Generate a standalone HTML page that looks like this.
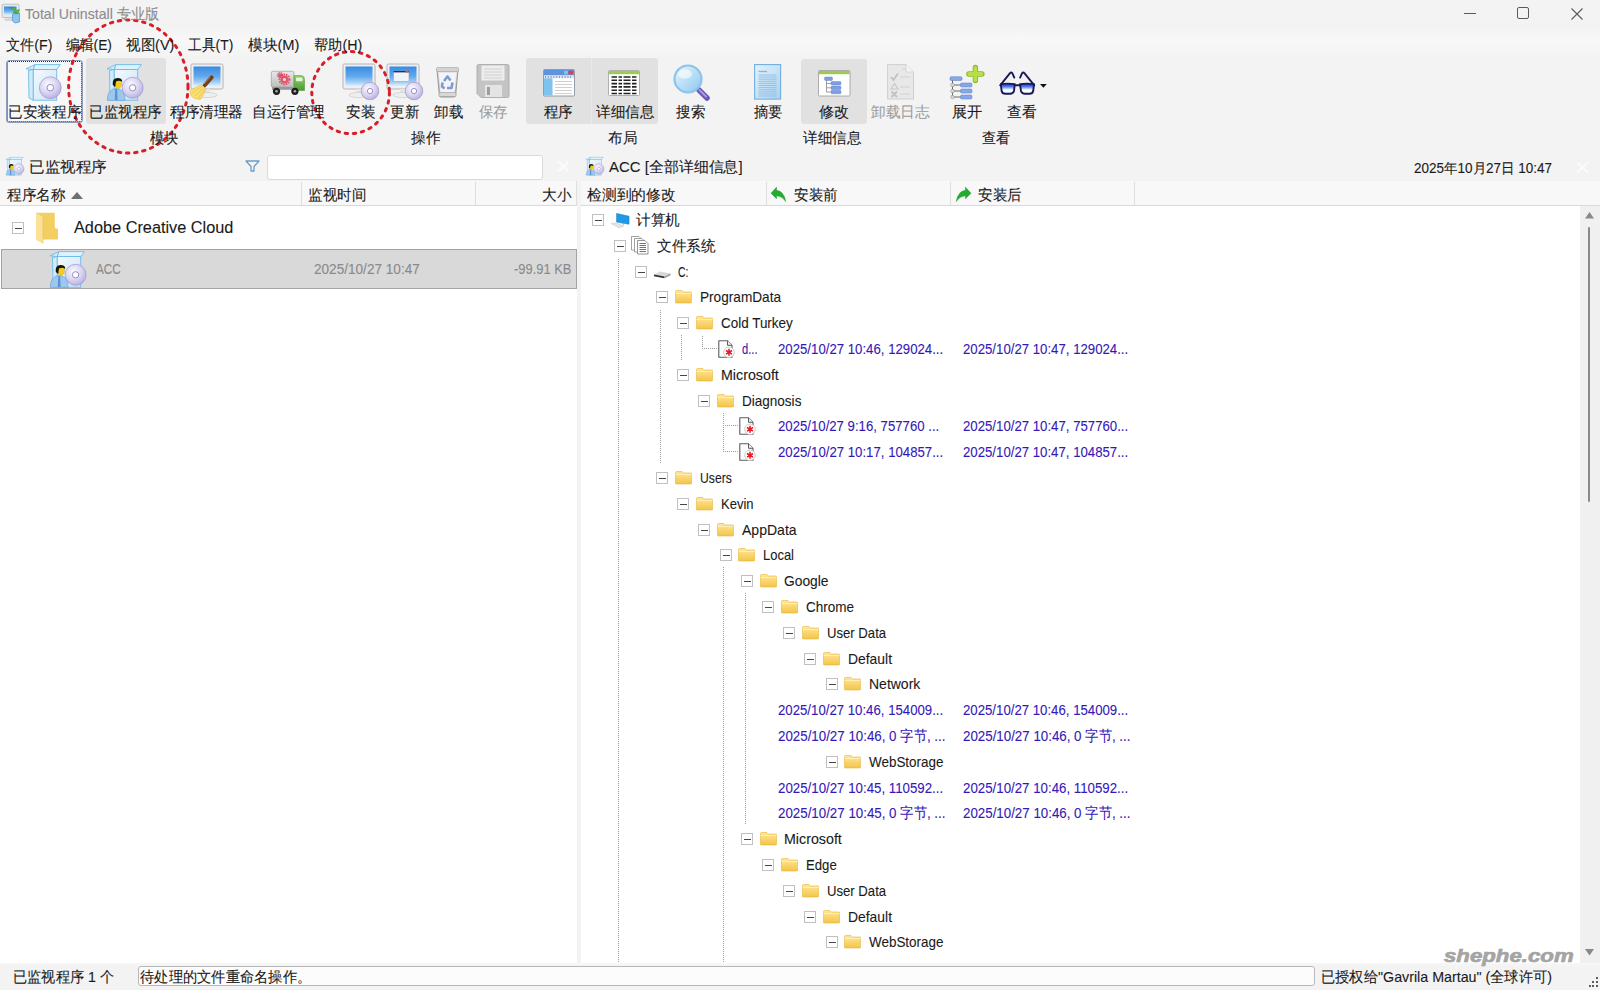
<!DOCTYPE html><html><head><meta charset="utf-8"><style>
html,body{margin:0;padding:0;width:1600px;height:990px;overflow:hidden;font-family:'Liberation Sans', sans-serif;background:#f3f3f3}
div[id]{-webkit-text-stroke:0.1px currentColor}
</style></head><body><svg width="0" height="0" style="position:absolute">
<defs>
<linearGradient id="gScreen" x1="0" y1="0" x2="0" y2="1"><stop offset="0" stop-color="#3a8ae2"/><stop offset="0.5" stop-color="#62aaec"/><stop offset="0.8" stop-color="#a6d2f6"/><stop offset="1" stop-color="#e8f4fd"/></linearGradient>
<radialGradient id="gCD" cx="0.4" cy="0.35" r="0.75"><stop offset="0" stop-color="#fbfaff"/><stop offset="0.55" stop-color="#d8d2f0"/><stop offset="1" stop-color="#aea6da"/></radialGradient>
<linearGradient id="gBox" x1="0" y1="0" x2="1" y2="1"><stop offset="0" stop-color="#f4faff"/><stop offset="1" stop-color="#c8e4f6"/></linearGradient>
<linearGradient id="gFolder" x1="0" y1="0" x2="0" y2="1"><stop offset="0" stop-color="#ffe89a"/><stop offset="1" stop-color="#f3c44a"/></linearGradient>
<linearGradient id="gFolderL" x1="0" y1="0" x2="1" y2="0"><stop offset="0" stop-color="#f6d77a"/><stop offset="1" stop-color="#fbe7a6"/></linearGradient>
<linearGradient id="gGray" x1="0" y1="0" x2="0" y2="1"><stop offset="0" stop-color="#e8e8e8"/><stop offset="1" stop-color="#bdbdbd"/></linearGradient>
<linearGradient id="gGreen" x1="0" y1="0" x2="0" y2="1"><stop offset="0" stop-color="#8fd46a"/><stop offset="1" stop-color="#4f9a34"/></linearGradient>
<linearGradient id="gMag" x1="0" y1="0" x2="1" y2="1"><stop offset="0" stop-color="#e9f6ff"/><stop offset="1" stop-color="#8cc8ee"/></linearGradient>
<linearGradient id="gPage" x1="0" y1="0" x2="1" y2="1"><stop offset="0" stop-color="#e4f2fc"/><stop offset="1" stop-color="#a9d3f1"/></linearGradient>
<linearGradient id="gGlass" x1="0" y1="0" x2="0" y2="1"><stop offset="0" stop-color="#ffffff"/><stop offset="1" stop-color="#3b59d8"/></linearGradient>
</defs></svg>
<div style="position:absolute;left:0px;top:0px;width:1600px;height:990px;background:#f3f3f3"></div>
<div style="position:absolute;left:0px;top:28px;width:1600px;height:28px;background:linear-gradient(#f3f3f3,#f8f8f8 40%,#f4f4f4)"></div>
<div style="position:absolute;left:1464px;top:13.1px;width:12px;height:1.3px;background:#5a5a5a"></div>
<div style="position:absolute;left:1517px;top:7px;width:12px;height:12px;border:1.2px solid #5a5a5a;border-radius:2px;box-sizing:border-box"></div>
<svg style="position:absolute;left:1571px;top:8px;overflow:visible" width="12" height="12" viewBox="0 0 12 12" ><path d="M0.5 0.5 L11.5 11.5 M11.5 0.5 L0.5 11.5" stroke="#5a5a5a" stroke-width="1.1"/></svg>
<div style="position:absolute;left:5.5px;top:59.5px;width:77.5px;height:63px;background:#f7f7f7;border:1px solid #8b9bb8;border-radius:3px;box-sizing:border-box;outline:1px dotted #1f2a44;outline-offset:-2px"></div>
<div style="position:absolute;left:85.5px;top:58px;width:80px;height:65.5px;background:#e1e1e1;border-radius:3px"></div>
<div style="position:absolute;left:525.5px;top:58px;width:132.5px;height:66px;background:#e1e1e1;border-radius:3px"></div>
<div style="position:absolute;left:591px;top:58px;width:1.2px;height:66px;background:#e9e9e9"></div>
<div style="position:absolute;left:801px;top:58.5px;width:66px;height:65.5px;background:#e1e1e1;border-radius:3px"></div>
<div style="position:absolute;left:266.5px;top:154.5px;width:276px;height:25px;background:#fff;border:1px solid #dadada;border-radius:3px;box-sizing:border-box"></div>
<svg style="position:absolute;left:558px;top:161px;overflow:visible" width="11" height="11" viewBox="0 0 11 11" ><path d="M0.5 0.5 L10.5 10.5 M10.5 0.5 L0.5 10.5" stroke="#fbfbfb" stroke-width="2"/></svg>
<svg style="position:absolute;left:245px;top:159.5px;overflow:visible" width="15" height="12" viewBox="0 0 15 12" ><path d="M1 1 L14 1 L9 6.5 L9 11 L6 11 L6 6.5 Z" fill="none" stroke="#6e9cc8" stroke-width="1.3" stroke-linejoin="round"/></svg>
<svg style="position:absolute;left:1577px;top:162px;overflow:visible" width="11" height="11" viewBox="0 0 11 11" ><path d="M0.5 0.5 L10.5 10.5 M10.5 0.5 L0.5 10.5" stroke="#fbfbfb" stroke-width="2"/></svg>
<div style="position:absolute;left:0px;top:181px;width:577px;height:782px;background:#fff"></div>
<div style="position:absolute;left:0px;top:181px;width:577px;height:25px;background:#f8f8f8;border-bottom:1px solid #d9d9d9;box-sizing:border-box"></div>
<div style="position:absolute;left:301px;top:182px;width:1px;height:23px;background:#dedede"></div>
<div style="position:absolute;left:475px;top:182px;width:1px;height:23px;background:#dedede"></div>
<div style="position:absolute;left:576px;top:181px;width:1px;height:25px;background:#dedede"></div>
<svg style="position:absolute;left:71px;top:192px;overflow:visible" width="12" height="7" viewBox="0 0 12 7" ><path d="M0 7 L6 0 L12 7 Z" fill="#707070"/></svg>
<div style="position:absolute;left:12px;top:222px;width:12px;height:12px;background:#fff;border:1px solid #c0c0c0;box-sizing:border-box"></div>
<div style="position:absolute;left:14.5px;top:227.5px;width:7px;height:1.5px;background:#474747"></div>
<div style="position:absolute;left:1px;top:248.5px;width:576px;height:40.5px;background:#d9d9d9;border:1px solid #a3a3a3;box-sizing:border-box"></div>
<div style="position:absolute;left:581px;top:181px;width:1019px;height:25px;background:#f8f8f8;border-bottom:1px solid #d9d9d9;box-sizing:border-box"></div>
<div style="position:absolute;left:581px;top:206px;width:999px;height:757px;background:#fff"></div>
<div style="position:absolute;left:1580px;top:206px;width:20px;height:757px;background:#f0f0f0"></div>
<div style="position:absolute;left:765.5px;top:182px;width:1px;height:23px;background:#dedede"></div>
<div style="position:absolute;left:949.5px;top:182px;width:1px;height:23px;background:#dedede"></div>
<div style="position:absolute;left:1134px;top:182px;width:1px;height:23px;background:#dedede"></div>
<div style="position:absolute;left:0px;top:963px;width:1600px;height:27px;background:linear-gradient(#f8f8f8,#f3f3f3 3px)"></div>
<div style="position:absolute;left:138px;top:966.4px;width:1177px;height:19.4px;background:#fcfcfc;border:1px solid #b8b8b8;border-radius:3px;box-sizing:border-box"></div>
<svg style="position:absolute;left:0px;top:0px;overflow:visible" width="24" height="26" viewBox="0 0 24 26" ><rect x="2" y="4.2" width="17" height="13.3" rx="1" fill="#e8e8e8" stroke="#b8b8b8" stroke-width="0.8"/><rect x="4" y="6.5" width="12.5" height="8.5" fill="url(#gScreen)"/><ellipse cx="9" cy="19.5" rx="5" ry="1.5" fill="#d8d8d8"/><path d="M12.5 14 L19.5 13 L19.5 22 L15 23 L12.5 21 Z" fill="#8cc6ee" stroke="#4f8fd0" stroke-width="0.7"/><path d="M9 7.5 Q15 6.5 17 10.5 L19.5 9.5 L17.5 14 L13 12.5 L15.5 11.5 Q14 9 9 7.5 Z" fill="#58b840" stroke="#2f8a2a" stroke-width="0.5"/></svg>
<svg style="position:absolute;left:5.5px;top:157px;overflow:visible" width="18" height="19" viewBox="0 0 36 38" ><path d="M0 4.8 L8.9 0.6 L7.3 5.5 Z" fill="#d6eefb" stroke="#6cbbe8" stroke-width="0.9" stroke-linejoin="round"/><path d="M8.9 0.6 L34.4 0.6 L30.7 5.5 L7.3 5.5 Z" fill="#dff2fc" stroke="#6cbbe8" stroke-width="0.9" stroke-linejoin="round"/><path d="M2.5 6.5 L7.3 5.5 L7.3 36.2 L3 34 Z" fill="#d2ebf9" stroke="#6cbbe8" stroke-width="0.9" stroke-linejoin="round"/><rect x="7.3" y="5.5" width="23.4" height="30.7" fill="url(#gBox)" stroke="#6cbbe8" stroke-width="0.9"/><circle cx="25.6" cy="23.8" r="10.5" fill="url(#gCD)" stroke="#a49cd0" stroke-width="0.8"/><circle cx="25.6" cy="23.8" r="3.15" fill="#fff" stroke="#8f86c4" stroke-width="0.94"/><path d="M0.3 36.4 Q0.3 25 9.2 24.5 Q18.2 25 18.2 36.4 Z" fill="#9cc8ee" stroke="#6ba4d8" stroke-width="0.7"/><path d="M8.2 25 L10.2 25 L10.6 36 L7.8 36 Z" fill="#5e90d6"/><ellipse cx="11" cy="19.8" rx="3.6" ry="4.7" fill="#f6cc1a" stroke="#c9a010" stroke-width="0.4"/><path d="M5.8 21 Q5 14 10.5 14 Q15.5 14 15.2 18 Q12.5 16 9 17.5 Q8.5 20 8.3 23 Z" fill="#141414"/></svg>
<svg style="position:absolute;left:586px;top:157px;overflow:visible" width="18" height="19" viewBox="0 0 36 38" ><path d="M0 4.8 L8.9 0.6 L7.3 5.5 Z" fill="#d6eefb" stroke="#6cbbe8" stroke-width="0.9" stroke-linejoin="round"/><path d="M8.9 0.6 L34.4 0.6 L30.7 5.5 L7.3 5.5 Z" fill="#dff2fc" stroke="#6cbbe8" stroke-width="0.9" stroke-linejoin="round"/><path d="M2.5 6.5 L7.3 5.5 L7.3 36.2 L3 34 Z" fill="#d2ebf9" stroke="#6cbbe8" stroke-width="0.9" stroke-linejoin="round"/><rect x="7.3" y="5.5" width="23.4" height="30.7" fill="url(#gBox)" stroke="#6cbbe8" stroke-width="0.9"/><circle cx="25.6" cy="23.8" r="10.5" fill="url(#gCD)" stroke="#a49cd0" stroke-width="0.8"/><circle cx="25.6" cy="23.8" r="3.15" fill="#fff" stroke="#8f86c4" stroke-width="0.94"/><path d="M0.3 36.4 Q0.3 25 9.2 24.5 Q18.2 25 18.2 36.4 Z" fill="#9cc8ee" stroke="#6ba4d8" stroke-width="0.7"/><path d="M8.2 25 L10.2 25 L10.6 36 L7.8 36 Z" fill="#5e90d6"/><ellipse cx="11" cy="19.8" rx="3.6" ry="4.7" fill="#f6cc1a" stroke="#c9a010" stroke-width="0.4"/><path d="M5.8 21 Q5 14 10.5 14 Q15.5 14 15.2 18 Q12.5 16 9 17.5 Q8.5 20 8.3 23 Z" fill="#141414"/></svg>
<svg style="position:absolute;left:50.3px;top:250.5px;overflow:visible" width="36" height="36.5" viewBox="0 0 36 36.5" ><path d="M0 4.8 L8.9 0.6 L7.3 5.5 Z" fill="#d6eefb" stroke="#6cbbe8" stroke-width="0.9" stroke-linejoin="round"/><path d="M8.9 0.6 L34.4 0.6 L30.7 5.5 L7.3 5.5 Z" fill="#dff2fc" stroke="#6cbbe8" stroke-width="0.9" stroke-linejoin="round"/><path d="M2.5 6.5 L7.3 5.5 L7.3 36.2 L3 34 Z" fill="#d2ebf9" stroke="#6cbbe8" stroke-width="0.9" stroke-linejoin="round"/><rect x="7.3" y="5.5" width="23.4" height="30.7" fill="url(#gBox)" stroke="#6cbbe8" stroke-width="0.9"/><circle cx="25.6" cy="23.8" r="10.5" fill="url(#gCD)" stroke="#a49cd0" stroke-width="0.8"/><circle cx="25.6" cy="23.8" r="3.15" fill="#fff" stroke="#8f86c4" stroke-width="0.94"/><path d="M0.3 36.4 Q0.3 25 9.2 24.5 Q18.2 25 18.2 36.4 Z" fill="#9cc8ee" stroke="#6ba4d8" stroke-width="0.7"/><path d="M8.2 25 L10.2 25 L10.6 36 L7.8 36 Z" fill="#5e90d6"/><ellipse cx="11" cy="19.8" rx="3.6" ry="4.7" fill="#f6cc1a" stroke="#c9a010" stroke-width="0.4"/><path d="M5.8 21 Q5 14 10.5 14 Q15.5 14 15.2 18 Q12.5 16 9 17.5 Q8.5 20 8.3 23 Z" fill="#141414"/></svg>
<svg style="position:absolute;left:0px;top:0px;overflow:visible" width="70" height="250" viewBox="0 0 70 250" ><path d="M36 212.8 L54.8 212.8 L54.8 228 L58 229 L58 239.5 L43 239.5 Z" fill="#f3cf62"/><path d="M36 212.8 L43 217 L43 243.5 L36 240 Z" fill="#fbe196"/><path d="M43 217 L43 243.5" stroke="#e8c050" stroke-width="0.6"/></svg>
<svg style="position:absolute;left:770px;top:186px;overflow:visible" width="17" height="16" viewBox="0 0 17 16" ><path d="M1 7.2 L6.5 1.2 L6.5 4.3 Q13.8 4.8 15.8 15.6 Q12 10 6.5 9.8 L6.5 12.8 Z" fill="#1fae2e" stroke="#158a22" stroke-width="0.4"/></svg>
<svg style="position:absolute;left:955px;top:186px;overflow:visible" width="17" height="16" viewBox="0 0 17 16" ><g transform="translate(17 0) scale(-1 1)"><path d="M1 7.2 L6.5 1.2 L6.5 4.3 Q13.8 4.8 15.8 15.6 Q12 10 6.5 9.8 L6.5 12.8 Z" fill="#1fae2e" stroke="#158a22" stroke-width="0.4"/></g></svg>
<div style="position:absolute;left:618px;top:259px;width:1px;height:704px;background:repeating-linear-gradient(#9a9a9a 0 1px,transparent 1px 2px)"></div>
<div style="position:absolute;left:660px;top:310px;width:1px;height:154px;background:repeating-linear-gradient(#9a9a9a 0 1px,transparent 1px 2px)"></div>
<div style="position:absolute;left:681px;top:335px;width:1px;height:26px;background:repeating-linear-gradient(#9a9a9a 0 1px,transparent 1px 2px)"></div>
<div style="position:absolute;left:702px;top:336px;width:1px;height:12px;background:repeating-linear-gradient(#9a9a9a 0 1px,transparent 1px 2px)"></div>
<div style="position:absolute;left:702px;top:348px;width:16px;height:1px;background:repeating-linear-gradient(90deg,#9a9a9a 0 1px,transparent 1px 2px)"></div>
<div style="position:absolute;left:723px;top:413px;width:1px;height:39px;background:repeating-linear-gradient(#9a9a9a 0 1px,transparent 1px 2px)"></div>
<div style="position:absolute;left:723px;top:425px;width:15px;height:1px;background:repeating-linear-gradient(90deg,#9a9a9a 0 1px,transparent 1px 2px)"></div>
<div style="position:absolute;left:723px;top:451px;width:15px;height:1px;background:repeating-linear-gradient(90deg,#9a9a9a 0 1px,transparent 1px 2px)"></div>
<div style="position:absolute;left:723px;top:567px;width:1px;height:396px;background:repeating-linear-gradient(#9a9a9a 0 1px,transparent 1px 2px)"></div>
<div style="position:absolute;left:745px;top:593px;width:1px;height:232px;background:repeating-linear-gradient(#9a9a9a 0 1px,transparent 1px 2px)"></div>
<div style="position:absolute;left:592px;top:214px;width:12px;height:12px;background:#fff;border:1px solid #c0c0c0;box-sizing:border-box"></div>
<div style="position:absolute;left:594.5px;top:219.5px;width:7px;height:1.5px;background:#474747"></div>
<svg style="position:absolute;left:611px;top:212.5px;overflow:visible" width="19" height="15.5" viewBox="0 0 19 15.5" ><path d="M5.6 0.5 L18 3.2 L18 11.2 L5.6 9 Z" fill="#1e9ae8" stroke="#177ec4" stroke-width="0.6"/><path d="M10 10 L13 10.6 L12 12" stroke="#a8a8a8" stroke-width="0.8" fill="none"/><path d="M0 10.5 L5 10 L13 13 L8 14.8 Z" fill="#e4e4e4" stroke="#c4c4c4" stroke-width="0.5"/></svg>
<div style="position:absolute;left:614px;top:240px;width:12px;height:12px;background:#fff;border:1px solid #c0c0c0;box-sizing:border-box"></div>
<div style="position:absolute;left:616.5px;top:245.5px;width:7px;height:1.5px;background:#474747"></div>
<svg style="position:absolute;left:631px;top:236px;overflow:visible" width="18" height="19" viewBox="0 0 18 19" ><path d="M0.5 0.5 L8 0.5 L11 3.5 L11 14 L0.5 14 Z" fill="#fff" stroke="#8a8a8a" stroke-width="0.8"/><path d="M3.5 2.5 L11 2.5 L14 5.5 L14 16 L3.5 16 Z" fill="#fff" stroke="#8a8a8a" stroke-width="0.8"/><path d="M6.5 4.5 L14 4.5 L17 7.5 L17 18 L6.5 18 Z" fill="#fff" stroke="#7a7a7a" stroke-width="0.8"/><path d="M8.5 7.5 L15 7.5 M8.5 9.5 L15 9.5 M8.5 11.5 L15 11.5 M8.5 13.5 L15 13.5 M8.5 15.5 L15 15.5" stroke="#3a7fd8" stroke-width="1"/></svg>
<div style="position:absolute;left:635px;top:266px;width:12px;height:12px;background:#fff;border:1px solid #c0c0c0;box-sizing:border-box"></div>
<div style="position:absolute;left:637.5px;top:271.5px;width:7px;height:1.5px;background:#474747"></div>
<svg style="position:absolute;left:653.5px;top:271px;overflow:visible" width="17" height="8" viewBox="0 0 17 8" ><path d="M0 3.5 L6 0.5 L16.5 2.5 L10.5 5.5 Z" fill="#d8d8d8"/><path d="M0 3.5 L10.5 5.5 L10.5 7.2 L0 5.2 Z" fill="#2e2e2e"/><path d="M10.5 5.5 L16.5 2.5 L16.5 4.2 L10.5 7.2 Z" fill="#9a9a9a"/></svg>
<div style="position:absolute;left:656px;top:291px;width:12px;height:12px;background:#fff;border:1px solid #c0c0c0;box-sizing:border-box"></div>
<div style="position:absolute;left:658.5px;top:296.5px;width:7px;height:1.5px;background:#474747"></div>
<svg style="position:absolute;left:674.5px;top:290.0px;overflow:visible" width="17" height="13.5" viewBox="0 0 17 13.5" ><path d="M0.5 1.5 Q0.5 0.5 1.5 0.5 L7 0.5 L8.5 2 L16 2 Q16.5 2 16.5 2.5 L16.5 12.5 Q16.5 13 16 13 L1 13 Q0.5 13 0.5 12.5 Z" fill="url(#gFolder)" stroke="#e8b53a" stroke-width="0.6"/><path d="M0.5 3.5 L16.5 3.5" stroke="#fff3c4" stroke-width="0.8"/></svg>
<div style="position:absolute;left:677px;top:317px;width:12px;height:12px;background:#fff;border:1px solid #c0c0c0;box-sizing:border-box"></div>
<div style="position:absolute;left:679.5px;top:322.5px;width:7px;height:1.5px;background:#474747"></div>
<svg style="position:absolute;left:696.0px;top:316.0px;overflow:visible" width="17" height="13.5" viewBox="0 0 17 13.5" ><path d="M0.5 1.5 Q0.5 0.5 1.5 0.5 L7 0.5 L8.5 2 L16 2 Q16.5 2 16.5 2.5 L16.5 12.5 Q16.5 13 16 13 L1 13 Q0.5 13 0.5 12.5 Z" fill="url(#gFolder)" stroke="#e8b53a" stroke-width="0.6"/><path d="M0.5 3.5 L16.5 3.5" stroke="#fff3c4" stroke-width="0.8"/></svg>
<svg style="position:absolute;left:717.5px;top:339.5px;overflow:visible" width="15" height="18" viewBox="0 0 15 18" ><path d="M0.8 0.8 L9.5 0.8 L14 5.3 L14 17.2 L0.8 17.2 Z" fill="#fff" stroke="#5c5c5c" stroke-width="1.1" stroke-linejoin="round"/><path d="M9.5 0.8 L9.5 5.3 L14 5.3" fill="#eee" stroke="#5c5c5c" stroke-width="1"/><circle cx="11" cy="12.3" r="5.3" fill="#fff" stroke="#bdbdbd" stroke-width="0.8"/><path d="M11 8.8 L11 15.8 M8 10.5 L14 14.1 M14 10.5 L8 14.1" stroke="#e8141e" stroke-width="1.5"/></svg>
<div style="position:absolute;left:677px;top:369px;width:12px;height:12px;background:#fff;border:1px solid #c0c0c0;box-sizing:border-box"></div>
<div style="position:absolute;left:679.5px;top:374.5px;width:7px;height:1.5px;background:#474747"></div>
<svg style="position:absolute;left:696.0px;top:367.5px;overflow:visible" width="17" height="13.5" viewBox="0 0 17 13.5" ><path d="M0.5 1.5 Q0.5 0.5 1.5 0.5 L7 0.5 L8.5 2 L16 2 Q16.5 2 16.5 2.5 L16.5 12.5 Q16.5 13 16 13 L1 13 Q0.5 13 0.5 12.5 Z" fill="url(#gFolder)" stroke="#e8b53a" stroke-width="0.6"/><path d="M0.5 3.5 L16.5 3.5" stroke="#fff3c4" stroke-width="0.8"/></svg>
<div style="position:absolute;left:698px;top:395px;width:12px;height:12px;background:#fff;border:1px solid #c0c0c0;box-sizing:border-box"></div>
<div style="position:absolute;left:700.5px;top:400.5px;width:7px;height:1.5px;background:#474747"></div>
<svg style="position:absolute;left:717.0px;top:393.5px;overflow:visible" width="17" height="13.5" viewBox="0 0 17 13.5" ><path d="M0.5 1.5 Q0.5 0.5 1.5 0.5 L7 0.5 L8.5 2 L16 2 Q16.5 2 16.5 2.5 L16.5 12.5 Q16.5 13 16 13 L1 13 Q0.5 13 0.5 12.5 Z" fill="url(#gFolder)" stroke="#e8b53a" stroke-width="0.6"/><path d="M0.5 3.5 L16.5 3.5" stroke="#fff3c4" stroke-width="0.8"/></svg>
<svg style="position:absolute;left:738.7px;top:416.9px;overflow:visible" width="15" height="18" viewBox="0 0 15 18" ><path d="M0.8 0.8 L9.5 0.8 L14 5.3 L14 17.2 L0.8 17.2 Z" fill="#fff" stroke="#5c5c5c" stroke-width="1.1" stroke-linejoin="round"/><path d="M9.5 0.8 L9.5 5.3 L14 5.3" fill="#eee" stroke="#5c5c5c" stroke-width="1"/><circle cx="11" cy="12.3" r="5.3" fill="#fff" stroke="#bdbdbd" stroke-width="0.8"/><path d="M11 8.8 L11 15.8 M8 10.5 L14 14.1 M14 10.5 L8 14.1" stroke="#e8141e" stroke-width="1.5"/></svg>
<svg style="position:absolute;left:738.7px;top:442.70000000000005px;overflow:visible" width="15" height="18" viewBox="0 0 15 18" ><path d="M0.8 0.8 L9.5 0.8 L14 5.3 L14 17.2 L0.8 17.2 Z" fill="#fff" stroke="#5c5c5c" stroke-width="1.1" stroke-linejoin="round"/><path d="M9.5 0.8 L9.5 5.3 L14 5.3" fill="#eee" stroke="#5c5c5c" stroke-width="1"/><circle cx="11" cy="12.3" r="5.3" fill="#fff" stroke="#bdbdbd" stroke-width="0.8"/><path d="M11 8.8 L11 15.8 M8 10.5 L14 14.1 M14 10.5 L8 14.1" stroke="#e8141e" stroke-width="1.5"/></svg>
<div style="position:absolute;left:656px;top:472px;width:12px;height:12px;background:#fff;border:1px solid #c0c0c0;box-sizing:border-box"></div>
<div style="position:absolute;left:658.5px;top:477.5px;width:7px;height:1.5px;background:#474747"></div>
<svg style="position:absolute;left:674.5px;top:471.0px;overflow:visible" width="17" height="13.5" viewBox="0 0 17 13.5" ><path d="M0.5 1.5 Q0.5 0.5 1.5 0.5 L7 0.5 L8.5 2 L16 2 Q16.5 2 16.5 2.5 L16.5 12.5 Q16.5 13 16 13 L1 13 Q0.5 13 0.5 12.5 Z" fill="url(#gFolder)" stroke="#e8b53a" stroke-width="0.6"/><path d="M0.5 3.5 L16.5 3.5" stroke="#fff3c4" stroke-width="0.8"/></svg>
<div style="position:absolute;left:677px;top:498px;width:12px;height:12px;background:#fff;border:1px solid #c0c0c0;box-sizing:border-box"></div>
<div style="position:absolute;left:679.5px;top:503.5px;width:7px;height:1.5px;background:#474747"></div>
<svg style="position:absolute;left:696.0px;top:496.5px;overflow:visible" width="17" height="13.5" viewBox="0 0 17 13.5" ><path d="M0.5 1.5 Q0.5 0.5 1.5 0.5 L7 0.5 L8.5 2 L16 2 Q16.5 2 16.5 2.5 L16.5 12.5 Q16.5 13 16 13 L1 13 Q0.5 13 0.5 12.5 Z" fill="url(#gFolder)" stroke="#e8b53a" stroke-width="0.6"/><path d="M0.5 3.5 L16.5 3.5" stroke="#fff3c4" stroke-width="0.8"/></svg>
<div style="position:absolute;left:698px;top:524px;width:12px;height:12px;background:#fff;border:1px solid #c0c0c0;box-sizing:border-box"></div>
<div style="position:absolute;left:700.5px;top:529.5px;width:7px;height:1.5px;background:#474747"></div>
<svg style="position:absolute;left:717.0px;top:522.5px;overflow:visible" width="17" height="13.5" viewBox="0 0 17 13.5" ><path d="M0.5 1.5 Q0.5 0.5 1.5 0.5 L7 0.5 L8.5 2 L16 2 Q16.5 2 16.5 2.5 L16.5 12.5 Q16.5 13 16 13 L1 13 Q0.5 13 0.5 12.5 Z" fill="url(#gFolder)" stroke="#e8b53a" stroke-width="0.6"/><path d="M0.5 3.5 L16.5 3.5" stroke="#fff3c4" stroke-width="0.8"/></svg>
<div style="position:absolute;left:720px;top:549px;width:12px;height:12px;background:#fff;border:1px solid #c0c0c0;box-sizing:border-box"></div>
<div style="position:absolute;left:722.5px;top:554.5px;width:7px;height:1.5px;background:#474747"></div>
<svg style="position:absolute;left:738.0px;top:548.0px;overflow:visible" width="17" height="13.5" viewBox="0 0 17 13.5" ><path d="M0.5 1.5 Q0.5 0.5 1.5 0.5 L7 0.5 L8.5 2 L16 2 Q16.5 2 16.5 2.5 L16.5 12.5 Q16.5 13 16 13 L1 13 Q0.5 13 0.5 12.5 Z" fill="url(#gFolder)" stroke="#e8b53a" stroke-width="0.6"/><path d="M0.5 3.5 L16.5 3.5" stroke="#fff3c4" stroke-width="0.8"/></svg>
<div style="position:absolute;left:741px;top:575px;width:12px;height:12px;background:#fff;border:1px solid #c0c0c0;box-sizing:border-box"></div>
<div style="position:absolute;left:743.5px;top:580.5px;width:7px;height:1.5px;background:#474747"></div>
<svg style="position:absolute;left:759.5px;top:574.0px;overflow:visible" width="17" height="13.5" viewBox="0 0 17 13.5" ><path d="M0.5 1.5 Q0.5 0.5 1.5 0.5 L7 0.5 L8.5 2 L16 2 Q16.5 2 16.5 2.5 L16.5 12.5 Q16.5 13 16 13 L1 13 Q0.5 13 0.5 12.5 Z" fill="url(#gFolder)" stroke="#e8b53a" stroke-width="0.6"/><path d="M0.5 3.5 L16.5 3.5" stroke="#fff3c4" stroke-width="0.8"/></svg>
<div style="position:absolute;left:762px;top:601px;width:12px;height:12px;background:#fff;border:1px solid #c0c0c0;box-sizing:border-box"></div>
<div style="position:absolute;left:764.5px;top:606.5px;width:7px;height:1.5px;background:#474747"></div>
<svg style="position:absolute;left:780.5px;top:600.0px;overflow:visible" width="17" height="13.5" viewBox="0 0 17 13.5" ><path d="M0.5 1.5 Q0.5 0.5 1.5 0.5 L7 0.5 L8.5 2 L16 2 Q16.5 2 16.5 2.5 L16.5 12.5 Q16.5 13 16 13 L1 13 Q0.5 13 0.5 12.5 Z" fill="url(#gFolder)" stroke="#e8b53a" stroke-width="0.6"/><path d="M0.5 3.5 L16.5 3.5" stroke="#fff3c4" stroke-width="0.8"/></svg>
<div style="position:absolute;left:783px;top:627px;width:12px;height:12px;background:#fff;border:1px solid #c0c0c0;box-sizing:border-box"></div>
<div style="position:absolute;left:785.5px;top:632.5px;width:7px;height:1.5px;background:#474747"></div>
<svg style="position:absolute;left:802.0px;top:625.5px;overflow:visible" width="17" height="13.5" viewBox="0 0 17 13.5" ><path d="M0.5 1.5 Q0.5 0.5 1.5 0.5 L7 0.5 L8.5 2 L16 2 Q16.5 2 16.5 2.5 L16.5 12.5 Q16.5 13 16 13 L1 13 Q0.5 13 0.5 12.5 Z" fill="url(#gFolder)" stroke="#e8b53a" stroke-width="0.6"/><path d="M0.5 3.5 L16.5 3.5" stroke="#fff3c4" stroke-width="0.8"/></svg>
<div style="position:absolute;left:804px;top:653px;width:12px;height:12px;background:#fff;border:1px solid #c0c0c0;box-sizing:border-box"></div>
<div style="position:absolute;left:806.5px;top:658.5px;width:7px;height:1.5px;background:#474747"></div>
<svg style="position:absolute;left:823.0px;top:651.5px;overflow:visible" width="17" height="13.5" viewBox="0 0 17 13.5" ><path d="M0.5 1.5 Q0.5 0.5 1.5 0.5 L7 0.5 L8.5 2 L16 2 Q16.5 2 16.5 2.5 L16.5 12.5 Q16.5 13 16 13 L1 13 Q0.5 13 0.5 12.5 Z" fill="url(#gFolder)" stroke="#e8b53a" stroke-width="0.6"/><path d="M0.5 3.5 L16.5 3.5" stroke="#fff3c4" stroke-width="0.8"/></svg>
<div style="position:absolute;left:826px;top:678px;width:12px;height:12px;background:#fff;border:1px solid #c0c0c0;box-sizing:border-box"></div>
<div style="position:absolute;left:828.5px;top:683.5px;width:7px;height:1.5px;background:#474747"></div>
<svg style="position:absolute;left:844.0px;top:677.0px;overflow:visible" width="17" height="13.5" viewBox="0 0 17 13.5" ><path d="M0.5 1.5 Q0.5 0.5 1.5 0.5 L7 0.5 L8.5 2 L16 2 Q16.5 2 16.5 2.5 L16.5 12.5 Q16.5 13 16 13 L1 13 Q0.5 13 0.5 12.5 Z" fill="url(#gFolder)" stroke="#e8b53a" stroke-width="0.6"/><path d="M0.5 3.5 L16.5 3.5" stroke="#fff3c4" stroke-width="0.8"/></svg>
<div style="position:absolute;left:826px;top:756px;width:12px;height:12px;background:#fff;border:1px solid #c0c0c0;box-sizing:border-box"></div>
<div style="position:absolute;left:828.5px;top:761.5px;width:7px;height:1.5px;background:#474747"></div>
<svg style="position:absolute;left:844.0px;top:754.5px;overflow:visible" width="17" height="13.5" viewBox="0 0 17 13.5" ><path d="M0.5 1.5 Q0.5 0.5 1.5 0.5 L7 0.5 L8.5 2 L16 2 Q16.5 2 16.5 2.5 L16.5 12.5 Q16.5 13 16 13 L1 13 Q0.5 13 0.5 12.5 Z" fill="url(#gFolder)" stroke="#e8b53a" stroke-width="0.6"/><path d="M0.5 3.5 L16.5 3.5" stroke="#fff3c4" stroke-width="0.8"/></svg>
<div style="position:absolute;left:741px;top:833px;width:12px;height:12px;background:#fff;border:1px solid #c0c0c0;box-sizing:border-box"></div>
<div style="position:absolute;left:743.5px;top:838.5px;width:7px;height:1.5px;background:#474747"></div>
<svg style="position:absolute;left:759.5px;top:832.0px;overflow:visible" width="17" height="13.5" viewBox="0 0 17 13.5" ><path d="M0.5 1.5 Q0.5 0.5 1.5 0.5 L7 0.5 L8.5 2 L16 2 Q16.5 2 16.5 2.5 L16.5 12.5 Q16.5 13 16 13 L1 13 Q0.5 13 0.5 12.5 Z" fill="url(#gFolder)" stroke="#e8b53a" stroke-width="0.6"/><path d="M0.5 3.5 L16.5 3.5" stroke="#fff3c4" stroke-width="0.8"/></svg>
<div style="position:absolute;left:762px;top:859px;width:12px;height:12px;background:#fff;border:1px solid #c0c0c0;box-sizing:border-box"></div>
<div style="position:absolute;left:764.5px;top:864.5px;width:7px;height:1.5px;background:#474747"></div>
<svg style="position:absolute;left:780.5px;top:858.0px;overflow:visible" width="17" height="13.5" viewBox="0 0 17 13.5" ><path d="M0.5 1.5 Q0.5 0.5 1.5 0.5 L7 0.5 L8.5 2 L16 2 Q16.5 2 16.5 2.5 L16.5 12.5 Q16.5 13 16 13 L1 13 Q0.5 13 0.5 12.5 Z" fill="url(#gFolder)" stroke="#e8b53a" stroke-width="0.6"/><path d="M0.5 3.5 L16.5 3.5" stroke="#fff3c4" stroke-width="0.8"/></svg>
<div style="position:absolute;left:783px;top:885px;width:12px;height:12px;background:#fff;border:1px solid #c0c0c0;box-sizing:border-box"></div>
<div style="position:absolute;left:785.5px;top:890.5px;width:7px;height:1.5px;background:#474747"></div>
<svg style="position:absolute;left:802.0px;top:883.5px;overflow:visible" width="17" height="13.5" viewBox="0 0 17 13.5" ><path d="M0.5 1.5 Q0.5 0.5 1.5 0.5 L7 0.5 L8.5 2 L16 2 Q16.5 2 16.5 2.5 L16.5 12.5 Q16.5 13 16 13 L1 13 Q0.5 13 0.5 12.5 Z" fill="url(#gFolder)" stroke="#e8b53a" stroke-width="0.6"/><path d="M0.5 3.5 L16.5 3.5" stroke="#fff3c4" stroke-width="0.8"/></svg>
<div style="position:absolute;left:804px;top:911px;width:12px;height:12px;background:#fff;border:1px solid #c0c0c0;box-sizing:border-box"></div>
<div style="position:absolute;left:806.5px;top:916.5px;width:7px;height:1.5px;background:#474747"></div>
<svg style="position:absolute;left:823.0px;top:909.5px;overflow:visible" width="17" height="13.5" viewBox="0 0 17 13.5" ><path d="M0.5 1.5 Q0.5 0.5 1.5 0.5 L7 0.5 L8.5 2 L16 2 Q16.5 2 16.5 2.5 L16.5 12.5 Q16.5 13 16 13 L1 13 Q0.5 13 0.5 12.5 Z" fill="url(#gFolder)" stroke="#e8b53a" stroke-width="0.6"/><path d="M0.5 3.5 L16.5 3.5" stroke="#fff3c4" stroke-width="0.8"/></svg>
<div style="position:absolute;left:826px;top:936px;width:12px;height:12px;background:#fff;border:1px solid #c0c0c0;box-sizing:border-box"></div>
<div style="position:absolute;left:828.5px;top:941.5px;width:7px;height:1.5px;background:#474747"></div>
<svg style="position:absolute;left:844.0px;top:935.0px;overflow:visible" width="17" height="13.5" viewBox="0 0 17 13.5" ><path d="M0.5 1.5 Q0.5 0.5 1.5 0.5 L7 0.5 L8.5 2 L16 2 Q16.5 2 16.5 2.5 L16.5 12.5 Q16.5 13 16 13 L1 13 Q0.5 13 0.5 12.5 Z" fill="url(#gFolder)" stroke="#e8b53a" stroke-width="0.6"/><path d="M0.5 3.5 L16.5 3.5" stroke="#fff3c4" stroke-width="0.8"/></svg>
<svg style="position:absolute;left:1585px;top:212px;overflow:visible" width="9" height="6.5" viewBox="0 0 9 6.5" ><path d="M0 6.5 L4.5 0 L9 6.5 Z" fill="#8a8a8a"/></svg>
<div style="position:absolute;left:1587.7px;top:227px;width:2.5px;height:275px;background:#8a8a8a;border-radius:2px"></div>
<svg style="position:absolute;left:1585px;top:949px;overflow:visible" width="9" height="6.5" viewBox="0 0 9 6.5" ><path d="M0 0 L4.5 6.5 L9 0 Z" fill="#8a8a8a"/></svg>
<div style="position:absolute;left:1596.3px;top:977.2px;width:2.2px;height:2.2px;background:#2a2a2a;border-radius:50%"></div>
<div style="position:absolute;left:1592.3px;top:980.8px;width:2.2px;height:2.2px;background:#2a2a2a;border-radius:50%"></div>
<div style="position:absolute;left:1596.3px;top:980.8px;width:2.2px;height:2.2px;background:#2a2a2a;border-radius:50%"></div>
<div style="position:absolute;left:1588.7px;top:984.5px;width:2.2px;height:2.2px;background:#2a2a2a;border-radius:50%"></div>
<div style="position:absolute;left:1592.3px;top:984.5px;width:2.2px;height:2.2px;background:#2a2a2a;border-radius:50%"></div>
<div style="position:absolute;left:1596.3px;top:984.5px;width:2.2px;height:2.2px;background:#2a2a2a;border-radius:50%"></div>
<svg style="position:absolute;left:25.8px;top:63.5px;overflow:visible" width="36" height="36" viewBox="0 0 36 36" ><path d="M0 4.8 L8.9 0.6 L7.3 5.5 Z" fill="#d6eefb" stroke="#6cbbe8" stroke-width="0.9" stroke-linejoin="round"/><path d="M8.9 0.6 L34.4 0.6 L30.7 5.5 L7.3 5.5 Z" fill="#dff2fc" stroke="#6cbbe8" stroke-width="0.9" stroke-linejoin="round"/><path d="M2.5 6.5 L7.3 5.5 L7.3 36.2 L3 34 Z" fill="#d2ebf9" stroke="#6cbbe8" stroke-width="0.9" stroke-linejoin="round"/><rect x="7.3" y="5.5" width="23.4" height="30.7" fill="url(#gBox)" stroke="#6cbbe8" stroke-width="0.9"/><circle cx="24.3" cy="23.7" r="10.9" fill="url(#gCD)" stroke="#a49cd0" stroke-width="0.8"/><circle cx="24.3" cy="23.7" r="3.27" fill="#fff" stroke="#8f86c4" stroke-width="0.98"/></svg>
<svg style="position:absolute;left:107px;top:63.5px;overflow:visible" width="36" height="36" viewBox="0 0 36 36" ><path d="M0 4.8 L8.9 0.6 L7.3 5.5 Z" fill="#d6eefb" stroke="#6cbbe8" stroke-width="0.9" stroke-linejoin="round"/><path d="M8.9 0.6 L34.4 0.6 L30.7 5.5 L7.3 5.5 Z" fill="#dff2fc" stroke="#6cbbe8" stroke-width="0.9" stroke-linejoin="round"/><path d="M2.5 6.5 L7.3 5.5 L7.3 36.2 L3 34 Z" fill="#d2ebf9" stroke="#6cbbe8" stroke-width="0.9" stroke-linejoin="round"/><rect x="7.3" y="5.5" width="23.4" height="30.7" fill="url(#gBox)" stroke="#6cbbe8" stroke-width="0.9"/><circle cx="25.6" cy="23.8" r="10.5" fill="url(#gCD)" stroke="#a49cd0" stroke-width="0.8"/><circle cx="25.6" cy="23.8" r="3.15" fill="#fff" stroke="#8f86c4" stroke-width="0.94"/><path d="M0.3 36.4 Q0.3 25 9.2 24.5 Q18.2 25 18.2 36.4 Z" fill="#9cc8ee" stroke="#6ba4d8" stroke-width="0.7"/><path d="M8.2 25 L10.2 25 L10.6 36 L7.8 36 Z" fill="#5e90d6"/><ellipse cx="11" cy="19.8" rx="3.6" ry="4.7" fill="#f6cc1a" stroke="#c9a010" stroke-width="0.4"/><path d="M5.8 21 Q5 14 10.5 14 Q15.5 14 15.2 18 Q12.5 16 9 17.5 Q8.5 20 8.3 23 Z" fill="#141414"/></svg>
<svg style="position:absolute;left:190px;top:63.4px;overflow:visible" width="35" height="36" viewBox="0 0 35 36" ><rect x="1" y="1" width="32" height="25" rx="1.5" fill="#efefef" stroke="#b4b4b4" stroke-width="1"/><rect x="3.5" y="3.5" width="27" height="20" fill="url(#gScreen)"/><rect x="14" y="26" width="6" height="4" fill="#e6e6e6"/><ellipse cx="17" cy="32" rx="10" ry="2.6" fill="#eeeeee" stroke="#cfcfcf" stroke-width="0.8"/><path d="M12.5 22.5 L20 13.5 Q21.5 12 22.8 13.2 Q24 14.5 22.5 16 L15 24.5 Z" fill="#7a3e10" stroke="#4a2508" stroke-width="0.5"/><path d="M14 21 L20.5 13.8" stroke="#d89050" stroke-width="0.7"/><path d="M11.5 21.5 L16 26 L11 36 Q5 37 1.5 33 Q-0.5 30 0 27.5 Z" fill="#f7df72" stroke="#d8b440" stroke-width="0.5"/><path d="M2.5 29.5 L12.5 23 M5 33 L14 24.5 M8.5 35 L15 26" stroke="#e6c24a" stroke-width="0.7"/></svg>
<svg style="position:absolute;left:270.8px;top:71px;overflow:visible" width="34" height="24" viewBox="0 0 34 24" ><rect x="0.3" y="0.3" width="22.6" height="16" rx="1.5" fill="url(#gGray)" stroke="#9c9c9c" stroke-width="0.7"/><g transform="translate(13.5 8.4)"><circle r="4.9" fill="none" stroke="#e0506a" stroke-width="2.2" stroke-dasharray="1.4 1.0"/><circle r="3.9" fill="#e25a6e"/><circle r="1.5" fill="#f6e0e0"/></g><g transform="translate(9 4.2)"><circle r="2.5" fill="none" stroke="#d84060" stroke-width="1.4" stroke-dasharray="1 0.8"/><circle r="1.8" fill="#e05068"/></g><path d="M23 4.6 L30.5 4.6 Q33.5 5 33.5 8.5 L33.5 19.5 L23 19.5 Z" fill="url(#gGreen)" stroke="#4a8a30" stroke-width="0.5"/><rect x="25" y="6.5" width="6.5" height="3.8" rx="0.8" fill="#e6f6dc"/><rect x="1" y="15.8" width="22.5" height="3" fill="#9a9a9a"/><circle cx="5.5" cy="20.3" r="3.6" fill="#1e1e1e"/><circle cx="5.5" cy="20.3" r="1.3" fill="#aaa"/><circle cx="23.9" cy="20.3" r="3.6" fill="#1e1e1e"/><circle cx="23.9" cy="20.3" r="1.3" fill="#aaa"/></svg>
<svg style="position:absolute;left:342px;top:63.2px;overflow:visible" width="37" height="36" viewBox="0 0 37 36" ><rect x="1" y="1" width="32" height="25" rx="1.5" fill="#efefef" stroke="#b4b4b4" stroke-width="1"/><rect x="3.5" y="3.5" width="27" height="20" fill="url(#gScreen)"/><rect x="14" y="26" width="6" height="4" fill="#e6e6e6"/><ellipse cx="17" cy="32" rx="10" ry="2.6" fill="#eeeeee" stroke="#cfcfcf" stroke-width="0.8"/><circle cx="28" cy="28" r="8.8" fill="url(#gCD)" stroke="#a49cd0" stroke-width="0.8"/><circle cx="28" cy="28" r="2.64" fill="#fff" stroke="#8f86c4" stroke-width="0.90"/></svg>
<svg style="position:absolute;left:386px;top:63.2px;overflow:visible" width="37" height="36" viewBox="0 0 37 36" ><rect x="1" y="1" width="32" height="25" rx="1.5" fill="#efefef" stroke="#b4b4b4" stroke-width="1"/><rect x="3.5" y="3.5" width="27" height="20" fill="url(#gScreen)"/><rect x="14" y="26" width="6" height="4" fill="#e6e6e6"/><ellipse cx="17" cy="32" rx="10" ry="2.6" fill="#eeeeee" stroke="#cfcfcf" stroke-width="0.8"/><rect x="7.5" y="8.5" width="15.5" height="10" fill="#f0f4f8" stroke="#8a9aaa" stroke-width="0.5"/><rect x="7.5" y="8" width="15.5" height="1.4" fill="#333"/><rect x="19.5" y="7.6" width="3" height="1.8" fill="#e05050"/><circle cx="28" cy="28" r="8.8" fill="url(#gCD)" stroke="#a49cd0" stroke-width="0.8"/><circle cx="28" cy="28" r="2.64" fill="#fff" stroke="#8f86c4" stroke-width="0.90"/></svg>
<svg style="position:absolute;left:436px;top:67px;overflow:visible" width="23" height="30" viewBox="0 0 23 30" ><path d="M1 3 L22 3 L19.5 29 Q19 30 18 30 L5 30 Q4 30 3.5 29 Z" fill="url(#gGray)" stroke="#8c8c8c" stroke-width="0.9"/><path d="M3 6 L20 6 L18.5 27 L4.5 27 Z" fill="#f2f4f6"/><rect x="0.5" y="0.5" width="22" height="4" rx="1" fill="#d4d4d4" stroke="#a0a0a0" stroke-width="0.6"/><rect x="3" y="25.5" width="17" height="4" rx="1" fill="#d8d8d8" stroke="#9a9a9a" stroke-width="0.6"/><g fill="none" stroke="#7f9ad6" stroke-width="2.6" stroke-linejoin="round"><path d="M8 14 L11.5 9.5 L14.5 13.5"/><path d="M16.5 15.5 L15.5 21 L11 21"/><path d="M6.5 15.5 L6 19.5 L8.5 21.5"/></g></svg>
<svg style="position:absolute;left:475.6px;top:64.4px;overflow:visible" width="34" height="34" viewBox="0 0 34 34" ><path d="M1 2 Q1 0.5 2.5 0.5 L31.5 0.5 Q33 0.5 33 2 L33 32 Q33 33.5 31.5 33.5 L5 33.5 L1 29.5 Z" fill="#c4c4c4" stroke="#a4a4a4" stroke-width="0.8"/><rect x="5.5" y="1.5" width="23" height="15" fill="#ededed"/><path d="M8 5 L26 5 M8 8 L26 8 M8 11 L26 11 M8 14 L26 14" stroke="#d0d0d0" stroke-width="1"/><rect x="9" y="21" width="17" height="12" fill="#e4e4e4"/><rect x="11" y="23" width="3" height="8" fill="#9e9e9e"/></svg>
<svg style="position:absolute;left:542.5px;top:68.7px;overflow:visible" width="32" height="27.5" viewBox="0 0 32 27.5" ><rect x="0.5" y="0.5" width="31" height="26.5" rx="1" fill="#fff" stroke="#7c8796" stroke-width="0.8"/><rect x="1" y="1" width="30" height="5.5" fill="#5e93e0"/><rect x="21" y="1.8" width="4" height="3.5" fill="#7fc0f0"/><rect x="25.5" y="1.8" width="4.5" height="3.5" fill="#e04040"/><rect x="1" y="6.5" width="30" height="2.8" fill="#dde6f4"/><path d="M2 8 L28 8" stroke="#445" stroke-width="1.2" stroke-dasharray="1 1.8"/><rect x="1" y="9.3" width="8.5" height="17.2" fill="#7ec2f0"/><path d="M12 12.5 L29 12.5 M12 15.5 L29 15.5 M12 18.5 L29 18.5 M12 21.5 L29 21.5 M12 24.5 L29 24.5" stroke="#c4c4c4" stroke-width="0.8"/></svg>
<svg style="position:absolute;left:608.4px;top:69.8px;overflow:visible" width="32" height="26" viewBox="0 0 32 26" ><rect x="0.5" y="0.5" width="31" height="25" rx="1" fill="#fff" stroke="#a0a0a0" stroke-width="0.8"/><rect x="1" y="1" width="30" height="3.2" fill="#9ccc4a"/><path d="M3.5 7.0 L28.5 7.0" stroke="#222" stroke-width="1.6" stroke-dasharray="5.5 1.5 3.5 1.5 7 1.5 4 0"/><path d="M3.5 10.3 L28.5 10.3" stroke="#222" stroke-width="1.6" stroke-dasharray="5.5 1.5 3.5 1.5 7 1.5 4 0"/><path d="M3.5 13.6 L28.5 13.6" stroke="#222" stroke-width="1.6" stroke-dasharray="5.5 1.5 3.5 1.5 7 1.5 4 0"/><path d="M3.5 16.9 L28.5 16.9" stroke="#222" stroke-width="1.6" stroke-dasharray="5.5 1.5 3.5 1.5 7 1.5 4 0"/><path d="M3.5 20.2 L28.5 20.2" stroke="#222" stroke-width="1.6" stroke-dasharray="5.5 1.5 3.5 1.5 7 1.5 4 0"/><path d="M3.5 23.5 L28.5 23.5" stroke="#222" stroke-width="1.6" stroke-dasharray="5.5 1.5 3.5 1.5 7 1.5 4 0"/></svg>
<svg style="position:absolute;left:672.5px;top:63.5px;overflow:visible" width="37" height="36" viewBox="0 0 37 36" ><path d="M26 26 L34 34" stroke="#6a5ab8" stroke-width="5.5" stroke-linecap="round"/><path d="M26.5 26 L33 32.5" stroke="#a89ae0" stroke-width="2" stroke-linecap="round"/><circle cx="15" cy="15" r="13.5" fill="url(#gMag)" stroke="#8cc4ec" stroke-width="2.2"/><ellipse cx="12" cy="10" rx="7" ry="4.5" fill="#fff" opacity="0.6"/></svg>
<svg style="position:absolute;left:753.7px;top:64.3px;overflow:visible" width="27.5" height="36" viewBox="0 0 27.5 36" ><rect x="0.6" y="0.6" width="26" height="34.5" fill="url(#gPage)" stroke="#72aee0" stroke-width="1.1"/><path d="M4.5 7.5 L13 7.5" stroke="#8ab6de" stroke-width="1.4"/><path d="M4.5 11.0 L22.5 11.0" stroke="#8fbce3" stroke-width="0.9"/><path d="M4.5 13.1 L22.5 13.1" stroke="#8fbce3" stroke-width="0.9"/><path d="M4.5 15.2 L22.5 15.2" stroke="#8fbce3" stroke-width="0.9"/><path d="M4.5 17.3 L22.5 17.3" stroke="#8fbce3" stroke-width="0.9"/><path d="M4.5 19.4 L22.5 19.4" stroke="#8fbce3" stroke-width="0.9"/><path d="M4.5 21.5 L22.5 21.5" stroke="#8fbce3" stroke-width="0.9"/><path d="M4.5 23.6 L22.5 23.6" stroke="#8fbce3" stroke-width="0.9"/><path d="M4.5 25.7 L22.5 25.7" stroke="#8fbce3" stroke-width="0.9"/><path d="M4.5 27.8 L22.5 27.8" stroke="#8fbce3" stroke-width="0.9"/><path d="M4.5 29.9 L22.5 29.9" stroke="#8fbce3" stroke-width="0.9"/><path d="M4.5 32.0 L22.5 32.0" stroke="#8fbce3" stroke-width="0.9"/></svg>
<svg style="position:absolute;left:817.7px;top:69.7px;overflow:visible" width="32.5" height="26.5" viewBox="0 0 32.5 26.5" ><rect x="0.5" y="0.5" width="31.5" height="25.5" rx="1" fill="#fff" stroke="#9a9a9a" stroke-width="0.8"/><rect x="1" y="1" width="30.5" height="3.2" fill="#9ccc4a"/><rect x="6.5" y="7" width="8" height="3.5" rx="1" fill="#7e9ee0" stroke="#5a78c0" stroke-width="0.4"/><path d="M8.5 10.5 L8.5 22 M8.5 13.5 L13 13.5 M8.5 17.8 L13 17.8 M8.5 22 L13 22" stroke="#777" stroke-width="0.7"/><rect x="13" y="11.5" width="10" height="3.5" rx="1" fill="#7e9ee0" stroke="#5a78c0" stroke-width="0.4"/><rect x="13" y="16" width="10" height="3.5" rx="1" fill="#7e9ee0" stroke="#5a78c0" stroke-width="0.4"/><rect x="13" y="20.3" width="10" height="3.5" rx="1" fill="#7e9ee0" stroke="#5a78c0" stroke-width="0.4"/></svg>
<svg style="position:absolute;left:886.5px;top:64.3px;overflow:visible" width="27.5" height="36" viewBox="0 0 27.5 36" ><path d="M0.6 0.6 L19 0.6 L26.5 8 L26.5 35 L0.6 35 Z" fill="#e8e8e8" stroke="#cfcfcf" stroke-width="1"/><path d="M19 0.6 L19 8 L26.5 8" fill="#f4f4f4" stroke="#cfcfcf" stroke-width="0.8"/><path d="M4 13 L6.5 16 L11 9.5" fill="none" stroke="#c2c2c2" stroke-width="1.8"/><path d="M7.5 19.5 L11 25 L4 25 Z" fill="none" stroke="#c8c8c8" stroke-width="1.2"/><path d="M4.5 27.5 L10 33 M10 27.5 L4.5 33" stroke="#c2c2c2" stroke-width="1.8"/><path d="M13 13 L23 13 M13 23 L23 23 M13 30 L23 30 M15 5 L19 5" stroke="#d2d2d2" stroke-width="1"/></svg>
<svg style="position:absolute;left:948.5px;top:65.8px;overflow:visible" width="35" height="34" viewBox="0 0 35 34" ><rect x="1" y="10.7" width="12" height="3.8" rx="1.2" fill="#86a8e6" stroke="#5a7ac6" stroke-width="0.5"/><path d="M3.5 14.5 L3.5 31 M3.5 19 L12 19 M3.5 25 L12 25 M3.5 31 L12 31" stroke="#444" stroke-width="0.8"/><circle cx="3.5" cy="19" r="1.8" fill="#d8d8d8" stroke="#888" stroke-width="0.5"/><circle cx="3.5" cy="25" r="1.8" fill="#d8d8d8" stroke="#888" stroke-width="0.5"/><circle cx="3.5" cy="31" r="1.8" fill="#d8d8d8" stroke="#888" stroke-width="0.5"/><rect x="11.5" y="17" width="11.5" height="4" rx="1.2" fill="#86a8e6" stroke="#5a7ac6" stroke-width="0.5"/><rect x="11.5" y="23" width="11.5" height="4" rx="1.2" fill="#86a8e6" stroke="#5a7ac6" stroke-width="0.5"/><rect x="11.5" y="29" width="11.5" height="4" rx="1.2" fill="#86a8e6" stroke="#5a7ac6" stroke-width="0.5"/><path d="M26.4 1.5 L26.4 14.5 M19.9 8 L32.9 8" stroke="#8ab82a" stroke-width="5.4" stroke-linecap="round"/><path d="M26.4 1.8 L26.4 14.2 M20.2 8 L32.6 8" stroke="#b8e046" stroke-width="3.8" stroke-linecap="round"/></svg>
<svg style="position:absolute;left:995px;top:68px;overflow:visible" width="45" height="28" viewBox="0 0 45 28" ><defs><linearGradient id="gLens" x1="0" y1="0" x2="0" y2="1"><stop offset="0" stop-color="#1f48e0"/><stop offset="0.25" stop-color="#3a6af0"/><stop offset="0.62" stop-color="#ffffff"/><stop offset="1" stop-color="#f4fbff"/></linearGradient></defs><g fill="none" stroke="#1a1a58" stroke-width="1.9" stroke-linecap="round" stroke-linejoin="round"><path d="M5.2 17.3 L14.8 5.3 Q16.2 3.8 17.4 5.3 L19.3 9.6"/><path d="M25.1 9.6 L27 5.3 Q28.2 3.8 29.6 5.3 L39.3 17.3"/><path d="M5.8 16.2 Q12.5 15 19.8 16.2 L19 23 Q18.2 25.8 15 25.8 L10.5 25.8 Q7.2 25.8 6.6 23 Z" fill="url(#gLens)"/><path d="M25 16.2 Q32 15 39 16.2 L38.2 23 Q37.6 25.8 34.5 25.8 L30 25.8 Q26.8 25.8 26 23 Z" fill="url(#gLens)"/><path d="M19.8 17.3 L25 17.3"/></g></svg>
<svg style="position:absolute;left:1040.2px;top:84px;overflow:visible" width="6.8" height="3.8" viewBox="0 0 6.8 3.8" ><path d="M0 0 L6.8 0 L3.4 3.8 Z" fill="#111"/></svg>
<svg style="position:absolute;left:0;top:0" width="1600" height="990"><ellipse cx="128.3" cy="86.5" rx="59.7" ry="66.5" fill="none" stroke="#d81e28" stroke-width="3" stroke-dasharray="2.5 5.7" stroke-linecap="round"/><ellipse cx="350.6" cy="92.6" rx="38.8" ry="41" fill="none" stroke="#d81e28" stroke-width="3" stroke-dasharray="2.5 5.7" stroke-linecap="round"/></svg>
<div id="t0" style="position:absolute;left:25px;top:4.00px;height:20px;font-size:15px;line-height:20px;color:#8c8c8c;white-space:nowrap;transform:scaleX(0.9400);transform-origin:0 50%;">Total Uninstall 专业版</div>
<div id="t1" style="position:absolute;left:5.6px;top:34.50px;height:20px;font-size:15px;line-height:20px;color:#1a1a1a;white-space:nowrap;transform:scaleX(0.9439);transform-origin:0 50%;">文件(F)</div>
<div id="t2" style="position:absolute;left:65.6px;top:34.50px;height:20px;font-size:15px;line-height:20px;color:#1a1a1a;white-space:nowrap;transform:scaleX(0.9180);transform-origin:0 50%;">编辑(E)</div>
<div id="t3" style="position:absolute;left:125.6px;top:34.50px;height:20px;font-size:15px;line-height:20px;color:#1a1a1a;white-space:nowrap;transform:scaleX(0.9680);transform-origin:0 50%;">视图(V)</div>
<div id="t4" style="position:absolute;left:187.75px;top:34.50px;height:20px;font-size:15px;line-height:20px;color:#1a1a1a;white-space:nowrap;transform:scaleX(0.9205);transform-origin:0 50%;">工具(T)</div>
<div id="t5" style="position:absolute;left:247.5px;top:34.50px;height:20px;font-size:15px;line-height:20px;color:#1a1a1a;white-space:nowrap;transform:scaleX(0.9810);transform-origin:0 50%;">模块(M)</div>
<div id="t6" style="position:absolute;left:313.75px;top:34.50px;height:20px;font-size:15px;line-height:20px;color:#1a1a1a;white-space:nowrap;transform:scaleX(0.9493);transform-origin:0 50%;">帮助(H)</div>
<div id="t7" style="position:absolute;left:8.1px;top:102.00px;height:20px;font-size:15px;line-height:20px;color:#1a1a1a;white-space:nowrap;transform:scaleX(0.9753);transform-origin:0 50%;">已安装程序</div>
<div id="t8" style="position:absolute;left:89.4px;top:102.00px;height:20px;font-size:15px;line-height:20px;color:#1a1a1a;white-space:nowrap;transform:scaleX(0.9680);transform-origin:0 50%;">已监视程序</div>
<div id="t9" style="position:absolute;left:169.6px;top:102.00px;height:20px;font-size:15px;line-height:20px;color:#1a1a1a;white-space:nowrap;transform:scaleX(0.9747);transform-origin:0 50%;">程序清理器</div>
<div id="t10" style="position:absolute;left:251.7px;top:102.00px;height:20px;font-size:15px;line-height:20px;color:#1a1a1a;white-space:nowrap;transform:scaleX(0.9667);transform-origin:0 50%;">自运行管理</div>
<div id="t11" style="position:absolute;left:345.6px;top:102.00px;height:20px;font-size:15px;line-height:20px;color:#1a1a1a;white-space:nowrap;transform:scaleX(0.9800);transform-origin:0 50%;">安装</div>
<div id="t12" style="position:absolute;left:390px;top:102.00px;height:20px;font-size:15px;line-height:20px;color:#1a1a1a;white-space:nowrap;transform:scaleX(0.9667);transform-origin:0 50%;">更新</div>
<div id="t13" style="position:absolute;left:434px;top:102.00px;height:20px;font-size:15px;line-height:20px;color:#1a1a1a;white-space:nowrap;transform:scaleX(0.9667);transform-origin:0 50%;">卸载</div>
<div id="t14" style="position:absolute;left:478.75px;top:102.00px;height:20px;font-size:15px;line-height:20px;color:#9d9d9d;white-space:nowrap;transform:scaleX(0.9583);transform-origin:0 50%;">保存</div>
<div id="t15" style="position:absolute;left:543.75px;top:102.00px;height:20px;font-size:15px;line-height:20px;color:#1a1a1a;white-space:nowrap;transform:scaleX(0.9583);transform-origin:0 50%;">程序</div>
<div id="t16" style="position:absolute;left:595.5px;top:102.00px;height:20px;font-size:15px;line-height:20px;color:#1a1a1a;white-space:nowrap;transform:scaleX(0.9708);transform-origin:0 50%;">详细信息</div>
<div id="t17" style="position:absolute;left:676px;top:102.00px;height:20px;font-size:15px;line-height:20px;color:#1a1a1a;white-space:nowrap;transform:scaleX(0.9667);transform-origin:0 50%;">搜索</div>
<div id="t18" style="position:absolute;left:753.5px;top:102.00px;height:20px;font-size:15px;line-height:20px;color:#1a1a1a;white-space:nowrap;transform:scaleX(0.9600);transform-origin:0 50%;">摘要</div>
<div id="t19" style="position:absolute;left:818.75px;top:102.00px;height:20px;font-size:15px;line-height:20px;color:#1a1a1a;white-space:nowrap;transform:scaleX(1.0083);transform-origin:0 50%;">修改</div>
<div id="t20" style="position:absolute;left:871px;top:102.00px;height:20px;font-size:15px;line-height:20px;color:#9d9d9d;white-space:nowrap;transform:scaleX(0.9783);transform-origin:0 50%;">卸载日志</div>
<div id="t21" style="position:absolute;left:951.5px;top:102.00px;height:20px;font-size:15px;line-height:20px;color:#1a1a1a;white-space:nowrap;transform:scaleX(1.0133);transform-origin:0 50%;">展开</div>
<div id="t22" style="position:absolute;left:1006.6px;top:102.00px;height:20px;font-size:15px;line-height:20px;color:#1a1a1a;white-space:nowrap;transform:scaleX(0.9767);transform-origin:0 50%;">查看</div>
<div id="t23" style="position:absolute;left:149.5px;top:128.00px;height:20px;font-size:15px;line-height:20px;color:#1a1a1a;white-space:nowrap;transform:scaleX(0.9500);transform-origin:0 50%;">模块</div>
<div id="t24" style="position:absolute;left:410.6px;top:128.00px;height:20px;font-size:15px;line-height:20px;color:#1a1a1a;white-space:nowrap;transform:scaleX(0.9800);transform-origin:0 50%;">操作</div>
<div id="t25" style="position:absolute;left:608px;top:128.00px;height:20px;font-size:15px;line-height:20px;color:#1a1a1a;white-space:nowrap;transform:scaleX(0.9667);transform-origin:0 50%;">布局</div>
<div id="t26" style="position:absolute;left:803px;top:128.00px;height:20px;font-size:15px;line-height:20px;color:#1a1a1a;white-space:nowrap;transform:scaleX(0.9750);transform-origin:0 50%;">详细信息</div>
<div id="t27" style="position:absolute;left:982px;top:128.00px;height:20px;font-size:15px;line-height:20px;color:#1a1a1a;white-space:nowrap;transform:scaleX(0.9333);transform-origin:0 50%;">查看</div>
<div id="t28" style="position:absolute;left:29px;top:156.50px;height:20px;font-size:15px;line-height:20px;color:#1a1a1a;white-space:nowrap;transform:scaleX(1.0400);transform-origin:0 50%;">已监视程序</div>
<div id="t29" style="position:absolute;left:609.4px;top:157.00px;height:20px;font-size:15px;line-height:20px;color:#1a1a1a;white-space:nowrap;transform:scaleX(0.9956);transform-origin:0 50%;">ACC [全部详细信息]</div>
<div id="t30" style="position:absolute;left:1414px;top:157.50px;height:20px;font-size:14px;line-height:20px;color:#1a1a1a;white-space:nowrap;transform:scaleX(0.9636);transform-origin:0 50%;">2025年10月27日 10:47</div>
<div id="t31" style="position:absolute;left:6.5px;top:184.50px;height:20px;font-size:15px;line-height:20px;color:#1a1a1a;white-space:nowrap;transform:scaleX(0.9750);transform-origin:0 50%;">程序名称</div>
<div id="t32" style="position:absolute;left:308px;top:185.00px;height:20px;font-size:15px;line-height:20px;color:#1a1a1a;white-space:nowrap;transform:scaleX(0.9667);transform-origin:0 50%;">监视时间</div>
<div id="t33" style="position:absolute;left:542px;top:185.00px;height:20px;font-size:15px;line-height:20px;color:#1a1a1a;white-space:nowrap;transform:scaleX(0.9667);transform-origin:0 50%;">大小</div>
<div id="t34" style="position:absolute;left:74.2px;top:218.00px;height:20px;font-size:17px;line-height:20px;color:#1a1a1a;white-space:nowrap;transform:scaleX(0.9583);transform-origin:0 50%;">Adobe Creative Cloud</div>
<div id="t35" style="position:absolute;left:95.6px;top:259.00px;height:20px;font-size:14px;line-height:20px;color:#8a8a8a;white-space:nowrap;transform:scaleX(0.8355);transform-origin:0 50%;">ACC</div>
<div id="t36" style="position:absolute;left:314.2px;top:259.00px;height:20px;font-size:14px;line-height:20px;color:#8a8a8a;white-space:nowrap;transform:scaleX(0.9706);transform-origin:0 50%;">2025/10/27 10:47</div>
<div id="t37" style="position:absolute;left:514.4px;top:259.00px;height:20px;font-size:14px;line-height:20px;color:#8a8a8a;white-space:nowrap;transform:scaleX(0.9219);transform-origin:0 50%;">-99.91 KB</div>
<div id="t38" style="position:absolute;left:586.9px;top:185.00px;height:20px;font-size:15px;line-height:20px;color:#1a1a1a;white-space:nowrap;transform:scaleX(0.9867);transform-origin:0 50%;">检测到的修改</div>
<div id="t39" style="position:absolute;left:793.8px;top:185.00px;height:20px;font-size:15px;line-height:20px;color:#1a1a1a;white-space:nowrap;transform:scaleX(0.9733);transform-origin:0 50%;">安装前</div>
<div id="t40" style="position:absolute;left:978px;top:185.00px;height:20px;font-size:15px;line-height:20px;color:#1a1a1a;white-space:nowrap;transform:scaleX(0.9689);transform-origin:0 50%;">安装后</div>
<div id="t41" style="position:absolute;left:13px;top:966.70px;height:20px;font-size:15px;line-height:20px;color:#1a1a1a;white-space:nowrap;transform:scaleX(0.9467);transform-origin:0 50%;">已监视程序 1 个</div>
<div id="t42" style="position:absolute;left:140px;top:966.50px;height:20px;font-size:15px;line-height:20px;color:#1a1a1a;white-space:nowrap;transform:scaleX(0.9500);transform-origin:0 50%;">待处理的文件重命名操作。</div>
<div id="t43" style="position:absolute;left:1321px;top:966.50px;height:20px;font-size:15px;line-height:20px;color:#1a1a1a;white-space:nowrap;transform:scaleX(0.9499);transform-origin:0 50%;">已授权给"Gavrila Martau" (全球许可)</div>
<div id="t44" style="position:absolute;left:636.0px;top:210.00px;height:20px;font-size:15px;line-height:20px;color:#1a1a1a;white-space:nowrap;transform:scaleX(0.9733);transform-origin:0 50%;">计算机</div>
<div id="t45" style="position:absolute;left:657.2px;top:235.80px;height:20px;font-size:15px;line-height:20px;color:#1a1a1a;white-space:nowrap;transform:scaleX(0.9767);transform-origin:0 50%;">文件系统</div>
<div id="t46" style="position:absolute;left:678.4px;top:261.60px;height:20px;font-size:15px;line-height:20px;color:#1a1a1a;white-space:nowrap;transform:scaleX(0.7000);transform-origin:0 50%;">C:</div>
<div id="t47" style="position:absolute;left:699.6px;top:287.40px;height:20px;font-size:15px;line-height:20px;color:#1a1a1a;white-space:nowrap;transform:scaleX(0.9080);transform-origin:0 50%;">ProgramData</div>
<div id="t48" style="position:absolute;left:720.8px;top:313.20px;height:20px;font-size:15px;line-height:20px;color:#1a1a1a;white-space:nowrap;transform:scaleX(0.8970);transform-origin:0 50%;">Cold Turkey</div>
<div id="t49" style="position:absolute;left:742.0px;top:339.00px;height:20px;font-size:15px;line-height:20px;color:#3418b8;white-space:nowrap;transform:scaleX(0.7431);transform-origin:0 50%;">d...</div>
<div id="t50" style="position:absolute;left:778.2px;top:339.00px;height:20px;font-size:15px;line-height:20px;color:#3418b8;white-space:nowrap;transform:scaleX(0.8803);transform-origin:0 50%;">2025/10/27 10:46, 129024...</div>
<div id="t51" style="position:absolute;left:962.5px;top:339.00px;height:20px;font-size:15px;line-height:20px;color:#3418b8;white-space:nowrap;transform:scaleX(0.8803);transform-origin:0 50%;">2025/10/27 10:47, 129024...</div>
<div id="t52" style="position:absolute;left:720.8px;top:364.80px;height:20px;font-size:15px;line-height:20px;color:#1a1a1a;white-space:nowrap;transform:scaleX(0.9500);transform-origin:0 50%;">Microsoft</div>
<div id="t53" style="position:absolute;left:742.0px;top:390.60px;height:20px;font-size:15px;line-height:20px;color:#1a1a1a;white-space:nowrap;transform:scaleX(0.9017);transform-origin:0 50%;">Diagnosis</div>
<div id="t54" style="position:absolute;left:778.2px;top:416.40px;height:20px;font-size:15px;line-height:20px;color:#3418b8;white-space:nowrap;transform:scaleX(0.8785);transform-origin:0 50%;">2025/10/27 9:16, 757760 ...</div>
<div id="t55" style="position:absolute;left:962.5px;top:416.40px;height:20px;font-size:15px;line-height:20px;color:#3418b8;white-space:nowrap;transform:scaleX(0.8803);transform-origin:0 50%;">2025/10/27 10:47, 757760...</div>
<div id="t56" style="position:absolute;left:778.2px;top:442.20px;height:20px;font-size:15px;line-height:20px;color:#3418b8;white-space:nowrap;transform:scaleX(0.8803);transform-origin:0 50%;">2025/10/27 10:17, 104857...</div>
<div id="t57" style="position:absolute;left:962.5px;top:442.20px;height:20px;font-size:15px;line-height:20px;color:#3418b8;white-space:nowrap;transform:scaleX(0.8803);transform-origin:0 50%;">2025/10/27 10:47, 104857...</div>
<div id="t58" style="position:absolute;left:699.6px;top:468.00px;height:20px;font-size:15px;line-height:20px;color:#1a1a1a;white-space:nowrap;transform:scaleX(0.8118);transform-origin:0 50%;">Users</div>
<div id="t59" style="position:absolute;left:720.8px;top:493.80px;height:20px;font-size:15px;line-height:20px;color:#1a1a1a;white-space:nowrap;transform:scaleX(0.8659);transform-origin:0 50%;">Kevin</div>
<div id="t60" style="position:absolute;left:742.0px;top:519.60px;height:20px;font-size:15px;line-height:20px;color:#1a1a1a;white-space:nowrap;transform:scaleX(0.9353);transform-origin:0 50%;">AppData</div>
<div id="t61" style="position:absolute;left:763.2px;top:545.40px;height:20px;font-size:15px;line-height:20px;color:#1a1a1a;white-space:nowrap;transform:scaleX(0.8645);transform-origin:0 50%;">Local</div>
<div id="t62" style="position:absolute;left:784.4px;top:571.20px;height:20px;font-size:15px;line-height:20px;color:#1a1a1a;white-space:nowrap;transform:scaleX(0.9199);transform-origin:0 50%;">Google</div>
<div id="t63" style="position:absolute;left:805.6px;top:597.00px;height:20px;font-size:15px;line-height:20px;color:#1a1a1a;white-space:nowrap;transform:scaleX(0.8996);transform-origin:0 50%;">Chrome</div>
<div id="t64" style="position:absolute;left:826.8px;top:622.80px;height:20px;font-size:15px;line-height:20px;color:#1a1a1a;white-space:nowrap;transform:scaleX(0.8752);transform-origin:0 50%;">User Data</div>
<div id="t65" style="position:absolute;left:848.0px;top:648.60px;height:20px;font-size:15px;line-height:20px;color:#1a1a1a;white-space:nowrap;transform:scaleX(0.9257);transform-origin:0 50%;">Default</div>
<div id="t66" style="position:absolute;left:869.2px;top:674.40px;height:20px;font-size:15px;line-height:20px;color:#1a1a1a;white-space:nowrap;transform:scaleX(0.9325);transform-origin:0 50%;">Network</div>
<div id="t67" style="position:absolute;left:778.2px;top:700.20px;height:20px;font-size:15px;line-height:20px;color:#3418b8;white-space:nowrap;transform:scaleX(0.8803);transform-origin:0 50%;">2025/10/27 10:46, 154009...</div>
<div id="t68" style="position:absolute;left:962.5px;top:700.20px;height:20px;font-size:15px;line-height:20px;color:#3418b8;white-space:nowrap;transform:scaleX(0.8803);transform-origin:0 50%;">2025/10/27 10:46, 154009...</div>
<div id="t69" style="position:absolute;left:778.2px;top:726.00px;height:20px;font-size:15px;line-height:20px;color:#3418b8;white-space:nowrap;transform:scaleX(0.8882);transform-origin:0 50%;">2025/10/27 10:46, 0 字节, ...</div>
<div id="t70" style="position:absolute;left:962.5px;top:726.00px;height:20px;font-size:15px;line-height:20px;color:#3418b8;white-space:nowrap;transform:scaleX(0.8882);transform-origin:0 50%;">2025/10/27 10:46, 0 字节, ...</div>
<div id="t71" style="position:absolute;left:869.2px;top:751.80px;height:20px;font-size:15px;line-height:20px;color:#1a1a1a;white-space:nowrap;transform:scaleX(0.8964);transform-origin:0 50%;">WebStorage</div>
<div id="t72" style="position:absolute;left:778.2px;top:777.60px;height:20px;font-size:15px;line-height:20px;color:#3418b8;white-space:nowrap;transform:scaleX(0.8855);transform-origin:0 50%;">2025/10/27 10:45, 110592...</div>
<div id="t73" style="position:absolute;left:962.5px;top:777.60px;height:20px;font-size:15px;line-height:20px;color:#3418b8;white-space:nowrap;transform:scaleX(0.8855);transform-origin:0 50%;">2025/10/27 10:46, 110592...</div>
<div id="t74" style="position:absolute;left:778.2px;top:803.40px;height:20px;font-size:15px;line-height:20px;color:#3418b8;white-space:nowrap;transform:scaleX(0.8882);transform-origin:0 50%;">2025/10/27 10:45, 0 字节, ...</div>
<div id="t75" style="position:absolute;left:962.5px;top:803.40px;height:20px;font-size:15px;line-height:20px;color:#3418b8;white-space:nowrap;transform:scaleX(0.8882);transform-origin:0 50%;">2025/10/27 10:46, 0 字节, ...</div>
<div id="t76" style="position:absolute;left:784.4px;top:829.20px;height:20px;font-size:15px;line-height:20px;color:#1a1a1a;white-space:nowrap;transform:scaleX(0.9500);transform-origin:0 50%;">Microsoft</div>
<div id="t77" style="position:absolute;left:805.6px;top:855.00px;height:20px;font-size:15px;line-height:20px;color:#1a1a1a;white-space:nowrap;transform:scaleX(0.8760);transform-origin:0 50%;">Edge</div>
<div id="t78" style="position:absolute;left:826.8px;top:880.80px;height:20px;font-size:15px;line-height:20px;color:#1a1a1a;white-space:nowrap;transform:scaleX(0.8752);transform-origin:0 50%;">User Data</div>
<div id="t79" style="position:absolute;left:848.0px;top:906.60px;height:20px;font-size:15px;line-height:20px;color:#1a1a1a;white-space:nowrap;transform:scaleX(0.9257);transform-origin:0 50%;">Default</div>
<div id="t80" style="position:absolute;left:869.2px;top:932.40px;height:20px;font-size:15px;line-height:20px;color:#1a1a1a;white-space:nowrap;transform:scaleX(0.8964);transform-origin:0 50%;">WebStorage</div>
<div id="t81" style="position:absolute;left:1444px;top:945.80px;height:20px;font-size:18.5px;line-height:20px;color:#a4a4a4;white-space:nowrap;transform:scaleX(1.2014);transform-origin:0 50%;font-weight:bold;font-style:italic;-webkit-text-stroke:0.7px #a4a4a4">shephe.com</div>
</body></html>
